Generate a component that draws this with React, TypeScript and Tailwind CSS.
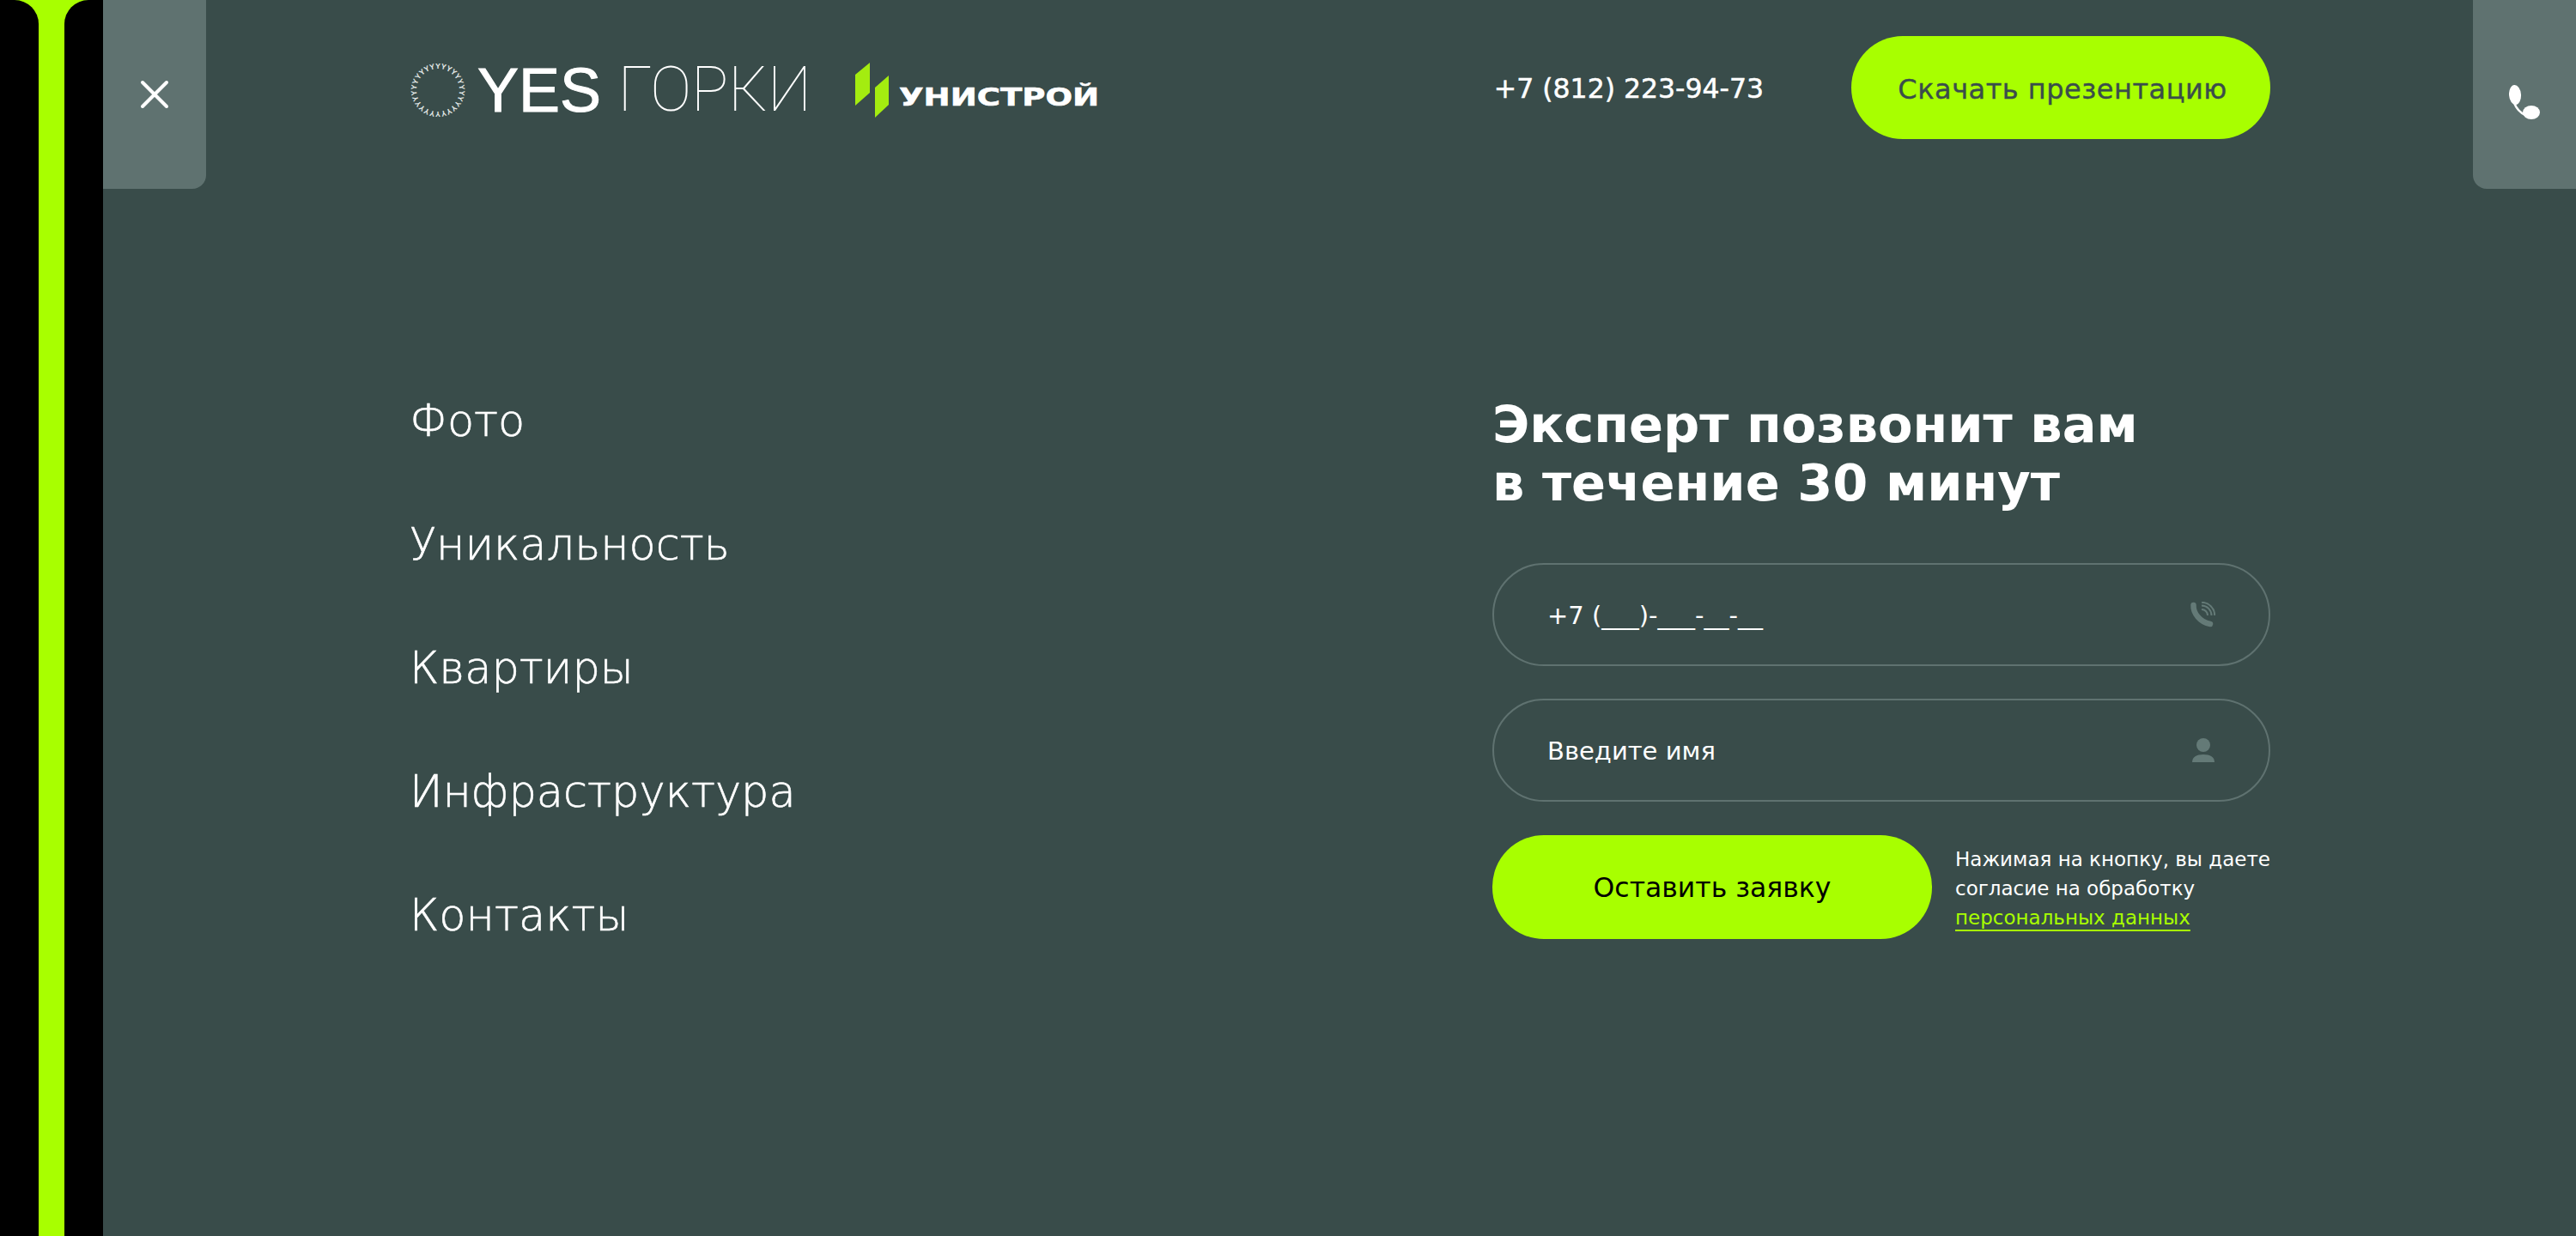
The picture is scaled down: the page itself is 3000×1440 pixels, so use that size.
const navItems = ["Фото", "Уникальность", "Квартиры", "Инфраструктура", "Контакты"];

const wide = "font-['DejaVu_Sans',sans-serif]";

function YesMark() {
  const count = 26;
  return (
    <svg width="66" height="66" viewBox="-33 -33 66 66" className="shrink-0">
      {Array.from({ length: count }).map((_, i) => (
        <text
          key={i}
          transform={`rotate(${(i * 360) / count}) translate(0 -25)`}
          textAnchor="middle"
          fontSize="9"
          fontWeight="700"
          fontFamily="Liberation Sans"
          fill="#e4e9e8"
        >
          Y
        </text>
      ))}
    </svg>
  );
}

function UnistroyLogo() {
  return (
    <svg width="286" height="64" viewBox="0 0 286 64" className="shrink-0">
      <polygon points="0,14 17,0 17,35 0,50" fill="#a4ec10" />
      <polygon points="23,29 39,15 39,49 23,64" fill="#a4ec10" />
      <text
        x="51"
        y="50"
        fontSize="29"
        fontWeight="700"
        fontFamily="DejaVu Sans"
        fill="#ffffff"
        stroke="#ffffff"
        strokeWidth="0.6"
        textLength="233"
        lengthAdjust="spacingAndGlyphs"
      >
        УНИСТРОЙ
      </text>
    </svg>
  );
}

function PhoneIcon() {
  return (
    <svg width="36" height="40" viewBox="0 0 36 40" fill="#ffffff" className="mt-[18px]">
      <ellipse cx="7" cy="11.500" rx="7" ry="11.500" transform="rotate(-4 7 11.500)" />
      <ellipse cx="26" cy="32" rx="10" ry="8" />
      <path d="M6 21Q10 31 19 35" fill="none" stroke="#ffffff" strokeWidth="2.500" />
    </svg>
  );
}

function CallIcon() {
  return (
    <svg width="30" height="30" viewBox="0 0 30 30" fill="none">
      <path d="M4.500 4C4 13 12 24 24 26" stroke="#647a77" strokeWidth="6.500" strokeLinecap="round" />
      <path d="M14 9a7 7 0 0 1 7 7M14 4.500a11.500 11.500 0 0 1 11.500 11.500M14 0.800a15.200 15.200 0 0 1 15.200 15.200" stroke="#647a77" strokeWidth="2" />
    </svg>
  );
}

function UserIcon() {
  return (
    <svg width="28" height="28" viewBox="0 0 28 28" fill="#647a77">
      <circle cx="14" cy="8" r="8" />
      <path d="M1 28c0-6 5-9 13-9s13 3 13 9z" />
    </svg>
  );
}

function Field({ text, icon }: { text: string; icon: React.ReactNode }) {
  return (
    <div className="flex items-center justify-between h-[120px] rounded-[60px] border-2 border-[#5f7270] pl-[62px] pr-[62px]">
      <span className={`pt-[3px] text-[29px] text-white ${wide}`}>{text}</span>
      {icon}
    </div>
  );
}

export default function App() {
  return (
    <div className="flex w-[3000px] h-[1440px] overflow-hidden bg-[#a8ff00]">
      <div className="flex w-[120px] shrink-0 gap-[30px]">
        <div className="w-[45px] bg-black rounded-tr-[28px]"></div>
        <div className="w-[45px] bg-black rounded-tl-[28px]"></div>
      </div>

      <div className="relative flex-1 bg-[#394c4a] pl-[357px] pr-[356px]">
        <div className="absolute left-0 top-0 flex items-center justify-center w-[120px] h-[220px] bg-[#5f7270] rounded-br-[16px]">
          <svg width="34" height="34" viewBox="0 0 34 34" stroke="#ffffff" strokeWidth="4" strokeLinecap="round">
            <path d="M3 3l28 28M31 3L3 31" />
          </svg>
        </div>
        <div className="absolute right-0 top-0 flex items-center justify-center w-[120px] h-[220px] bg-[#5f7270] rounded-bl-[16px]">
          <PhoneIcon />
        </div>

        <header className="flex items-center justify-between h-[204px]">
          <div className="flex items-center mt-[6px]">
            <YesMark />
            <span className="ml-[13px] text-[72px] leading-none text-white font-['Liberation_Sans',sans-serif] [-webkit-text-stroke:1px_#fff]">YES</span>
            <span className="ml-[20px] text-[72px] leading-none text-white font-thin font-['Roboto',sans-serif]">ГОРКИ</span>
            <div className="ml-[51px]">
              <UnistroyLogo />
            </div>
          </div>
          <div className="flex items-center gap-[102px]">
            <span className={`pt-[3px] text-[31.500px] text-white [-webkit-text-stroke:0.5px_#fff] ${wide}`}>+7 (812) 223-94-73</span>
            <button className={`w-[488px] h-[120px] pl-[4px] pt-[3px] rounded-[60px] bg-[#a8ff00] text-[#3a4d4b] text-[32px] tracking-[0.5px] [-webkit-text-stroke:0.4px_#3a4d4b] ${wide}`}>
              Скачать презентацию
            </button>
          </div>
        </header>

        <div className="flex justify-between pt-[257px]">
          <nav className="flex flex-col gap-[84px]">
            {navItems.map((item) => (
              <a key={item} className={`text-[51px] leading-[60px] text-white font-extralight [-webkit-text-stroke:0.6px_#fff] ${wide}`}>
                {item}
              </a>
            ))}
          </nav>

          <div className="w-[906px]">
            <h2 className={`text-[59px] leading-[68px] font-bold text-white ${wide}`}>
              Эксперт позвонит вам
              <br />
              в течение 30 минут
            </h2>
            <div className="flex flex-col gap-[38px] mt-[59px]">
              <Field text="+7 (___)-___-__-__" icon={<CallIcon />} />
              <Field text="Введите имя" icon={<UserIcon />} />
            </div>
            <div className="flex items-center gap-[27px] mt-[39px]">
              <button className={`w-[512px] h-[121px] pt-[3px] shrink-0 rounded-[60px] bg-[#a8ff00] text-black text-[31.500px] ${wide}`}>
                Оставить заявку
              </button>
              <p className={`pt-[3px] text-[23px] leading-[34px] text-white whitespace-nowrap ${wide}`}>
                Нажимая на кнопку, вы даете
                <br />
                согласие на обработку
                <br />
                <a className="text-[#a8ff00] underline underline-offset-[6px]">персональных данных</a>
              </p>
            </div>
          </div>
        </div>
      </div>
    </div>
  );
}
